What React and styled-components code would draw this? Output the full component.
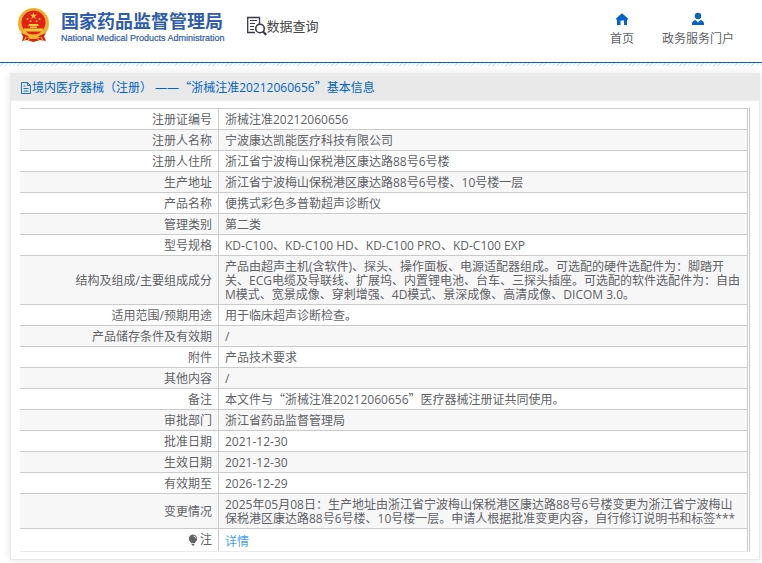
import React from 'react'
import styled, { createGlobalStyle } from 'styled-components';

const GlobalStyle = createGlobalStyle`
    * {
        box-sizing: border-box;
    }
    body {
        margin: 0;
        background: #fff;
        color: #606266;
        font-family: "Open Sans", "Noto Sans CJK SC", sans-serif;
        font-size: 12px;
        line-height: 14px;
    }
`;

const Header = styled.header`
    display: flex;
    align-items: flex-start;
    height: 63px;
    padding: 7px 28px 0 16px;
    border-bottom: 1px solid #0064c8;
`;

const Logo = styled.a`
    display: flex;
    align-items: flex-start;
    gap: 10px;
    color: #2d5cb0;
    text-decoration: none;
`;

const LogoText = styled.div`
    display: flex;
    flex-direction: column;
    padding-top: 4px;
    white-space: nowrap;
`;

const LogoName = styled.span`
    font-size: 18px;
    font-weight: 700;
    line-height: 20px;
`;

const LogoEnglish = styled.span`
    font-family: "Liberation Sans", sans-serif;
    font-size: 9px;
    line-height: 15px;
    -webkit-text-stroke: 0.2px #2d5cb0;
`;

const QueryLink = styled.a`
    display: flex;
    align-items: center;
    margin: 9px 0 0 22px;
    color: #444;
    font-size: 13px;
    line-height: 20px;
    text-decoration: none;
    white-space: nowrap;
`;

const Nav = styled.nav`
    display: flex;
    gap: 28px;
    margin-left: auto;
    padding-top: 5px;
`;

const NavLink = styled.a`
    display: flex;
    flex-direction: column;
    align-items: center;
    gap: 5px;
    color: #606266;
    line-height: 16px;
    text-decoration: none;
    white-space: nowrap;
`;

const Hatch = styled.div`
    height: 3px;
    background: repeating-linear-gradient(135deg, #fff 0 2px, #e2e2e6 2px 3px);
`;

const Panel = styled.main`
    margin: 7px 2px 3px 10px;
    border: 1px solid #e9e9eb;
    border-top: 0;
    box-shadow: 0 0 8px rgba(0, 0, 0, 0.1);
`;

const PanelTitle = styled.h1`
    display: flex;
    align-items: center;
    height: 28px;
    margin: 0 -1px;
    padding: 2px 11px 0;
    border-bottom: 1px solid #ebeef5;
    background: #e9e9e9;
    color: #0064c8;
    font-size: 12px;
    font-weight: 400;
`;

const TableWrap = styled.div`
    margin: 7px 9px;
    padding-right: 1px;
    border-right: 1px solid #cbcbcf;
`;

const Table = styled.table`
    width: 100%;
    border-spacing: 0;
    border-right: 1px solid #cbcbcf;
    border-bottom: 1px solid #ebebeb;
    table-layout: fixed;
`;

const Row = styled.tr`
    &:nth-child(even) {
        background: #f7f7f7;
    }
    &:last-child {
        background: #fff;
    }
`;

const Label = styled.th`
    width: 198px;
    padding: 4px 6px 2px 0;
    border-top: 1px solid #cbcbcb;
    font-weight: 400;
    text-align: right;
`;

const LabelInner = styled.span`
    display: inline-flex;
    align-items: center;
    gap: 2px;
`;

const Value = styled.td`
    padding: ${({$note}) => $note ? '6px 6px 2px' : '4px 6px 2px'};
    border-top: 1px solid #cbcbcb;
    border-left: 1px solid #cbcbcb;
`;

const DetailLink = styled.a`
    color: #409eff;
    text-decoration: none;
`;

// full-width quotes, the short line keeps the row height
const Quote = styled.span`
    font-family: "Noto Sans CJK SC", sans-serif;
    line-height: 1;
`;

const rows = [
  ['注册证编号', '浙械注准20212060656'],
  ['注册人名称', '宁波康达凯能医疗科技有限公司'],
  ['注册人住所', '浙江省宁波梅山保税港区康达路88号6号楼'],
  ['生产地址', '浙江省宁波梅山保税港区康达路88号6号楼、10号楼一层'],
  ['产品名称', '便携式彩色多普勒超声诊断仪'],
  ['管理类别', '第二类'],
  ['型号规格', 'KD-C100、KD-C100 HD、KD-C100 PRO、KD-C100 EXP'],
  ['结构及组成/主要组成成分', '产品由超声主机(含软件)、探头、操作面板、电源适配器组成。可选配的硬件选配件为：脚踏开关、ECG电缆及导联线、扩展坞、内置锂电池、台车、三探头插座。可选配的软件选配件为：自由M模式、宽景成像、穿刺增强、4D模式、景深成像、高清成像、DICOM 3.0。'],
  ['适用范围/预期用途', '用于临床超声诊断检查。'],
  ['产品储存条件及有效期', '/'],
  ['附件', '产品技术要求'],
  ['其他内容', '/'],
  ['备注', '本文件与“浙械注准20212060656”医疗器械注册证共同使用。'],
  ['审批部门', '浙江省药品监督管理局'],
  ['批准日期', '2021-12-30'],
  ['生效日期', '2021-12-30'],
  ['有效期至', '2026-12-29'],
  ['变更情况', '2025年05月08日：生产地址由浙江省宁波梅山保税港区康达路88号6号楼变更为浙江省宁波梅山保税港区康达路88号6号楼、10号楼一层。申请人根据批准变更内容，自行修订说明书和标签***'],
];

const QuotedText = ({ text }) => (
  <span>
    {text.split(/([“”])/).map((part, i) => (
      i % 2 ? <Quote key={i}>{part}</Quote> : part
    ))}
  </span>
)

const Emblem = () => (
  <svg width="35" height="36" viewBox="0 0 35 36" aria-hidden="true">
    <path d="M8 27 L27 27 L30 34 L24 33 L17.5 35 L11 33 L6 34 Z" fill="#dc2018" />
    <circle cx="17.500" cy="16.500" r="15.500" fill="#f2b72c" />
    <circle cx="17.500" cy="16.500" r="14" fill="none" stroke="#e6a426" strokeWidth="1" strokeDasharray="2 1" />
    <circle cx="17.500" cy="15.500" r="12" fill="#e52019" />
    <path d="M17.500 5.200 L18.400 7.700 L21 7.700 L18.900 9.300 L19.700 11.900 L17.500 10.300 L15.300 11.900 L16.100 9.300 L14 7.700 L16.600 7.700 Z" fill="#f7cf3b" />
    <g fill="#f7cf3b">
      <circle cx="11.500" cy="12" r="1" />
      <circle cx="14.500" cy="14.300" r="1" />
      <circle cx="20.500" cy="14.300" r="1" />
      <circle cx="23.500" cy="12" r="1" />
      <path d="M13 17 H22 L23 19 H12 Z M14 19.500 H21 V21 H14 Z M8 21.500 H27 L26.500 24.500 H8.500 Z" />
    </g>
    <path d="M5 26 L12 29 H23 L30 26 L27 31 L21 30 L17.500 33 L14 30 L8 31 Z" fill="#dc2018" />
    <path d="M12 29 H23 L20.500 32 H14.500 Z" fill="#f2b72c" />
    <path d="M10 30 L8 34 M13 32 L12 34 M25 30 L27 34 M22 32 L23 34" stroke="#f2b72c" strokeWidth="1.200" />
  </svg>
)

const QueryIcon = () => (
  <svg width="20" height="20" viewBox="0 0 20 20" fill="none" stroke="#3a3747" aria-hidden="true">
    <path d="M8 16.500 H0.700 V1.500 H12.500 V8" strokeWidth="1.300" />
    <path d="M3 4.500 H10 M3 7.500 H8 M3 10.500 H7 M3 13.500 H7" strokeWidth="1" />
    <circle cx="13" cy="12.500" r="4.300" strokeWidth="1.600" />
    <path d="M16 15.500 L19.300 19" strokeWidth="2.200" />
  </svg>
)

const HomeIcon = () => (
  <svg width="14" height="14" viewBox="0 0 14 14" aria-hidden="true">
    <path d="M7 1.200 L13 6.500 V7.500 H12 V13 H9 V8.500 H5.500 V13 H2 V7.500 H1 V6.500 Z" fill="#0064c8" />
  </svg>
)

const UserIcon = () => (
  <svg width="14" height="14" viewBox="0 0 14 14" aria-hidden="true">
    <circle cx="7" cy="4" r="3.200" fill="#0064c8" />
    <path d="M1 13 V11.500 Q1.300 8.600 4.500 8 L7 10.500 L9.500 8 Q12.700 8.600 13 11.500 V13 Z" fill="#0064c8" />
  </svg>
)

const DocIcon = () => (
  <svg width="11" height="12" viewBox="0 0 11 12" fill="none" stroke="#0064c8" strokeWidth="0.900" aria-hidden="true">
    <path d="M0.500 0.500 H6.500 L9.500 3.500 V11.500 H0.500 Z M6.500 0.500 V3.500 H9.500 M2.500 4 H4.500 M2.500 6.500 H7.500 M2.500 9 H7.500" />
  </svg>
)

const BulbIcon = () => (
  <svg width="10" height="12" viewBox="0 0 10 12" aria-hidden="true">
    <path d="M5 0.500 A4.200 4.200 0 0 1 7.500 8 L6.800 9.200 H3.200 L2.500 8 A4.200 4.200 0 0 1 5 0.500 Z M3.500 10 H6.500 L6 11.500 H4 Z" fill="#606266" />
    <path d="M5.500 2 Q7.500 2.400 7.800 4.300" fill="none" stroke="#fff" strokeWidth="0.800" />
  </svg>
)

const App = () => {
  return (
    <>
      <GlobalStyle />
      <Header>
        <Logo href="#home">
          <Emblem />
          <LogoText>
            <LogoName>国家药品监督管理局</LogoName>
            <LogoEnglish>National Medical Products Administration</LogoEnglish>
          </LogoText>
        </Logo>
        <QueryLink href="#query">
          <QueryIcon />
          数据查询
        </QueryLink>
        <Nav>
          <NavLink href="#home">
            <HomeIcon />
            首页
          </NavLink>
          <NavLink href="#portal">
            <UserIcon />
            政务服务门户
          </NavLink>
        </Nav>
      </Header>
      <Hatch />
      <Panel>
        <PanelTitle>
          <DocIcon />
          <QuotedText text="境内医疗器械（注册） ——“浙械注准20212060656”基本信息" />
        </PanelTitle>
        <TableWrap>
          <Table>
            <tbody>
              {rows.map(([label, value]) => (
                <Row key={label}>
                  <Label scope="row">{label}</Label>
                  <Value><QuotedText text={value} /></Value>
                </Row>
              ))}
              <Row>
                <Label scope="row">
                  <LabelInner>
                    <BulbIcon />
                    注
                  </LabelInner>
                </Label>
                <Value $note>
                  <DetailLink href="#detail">详情</DetailLink>
                </Value>
              </Row>
            </tbody>
          </Table>
        </TableWrap>
      </Panel>
    </>
  )
}

export default App
